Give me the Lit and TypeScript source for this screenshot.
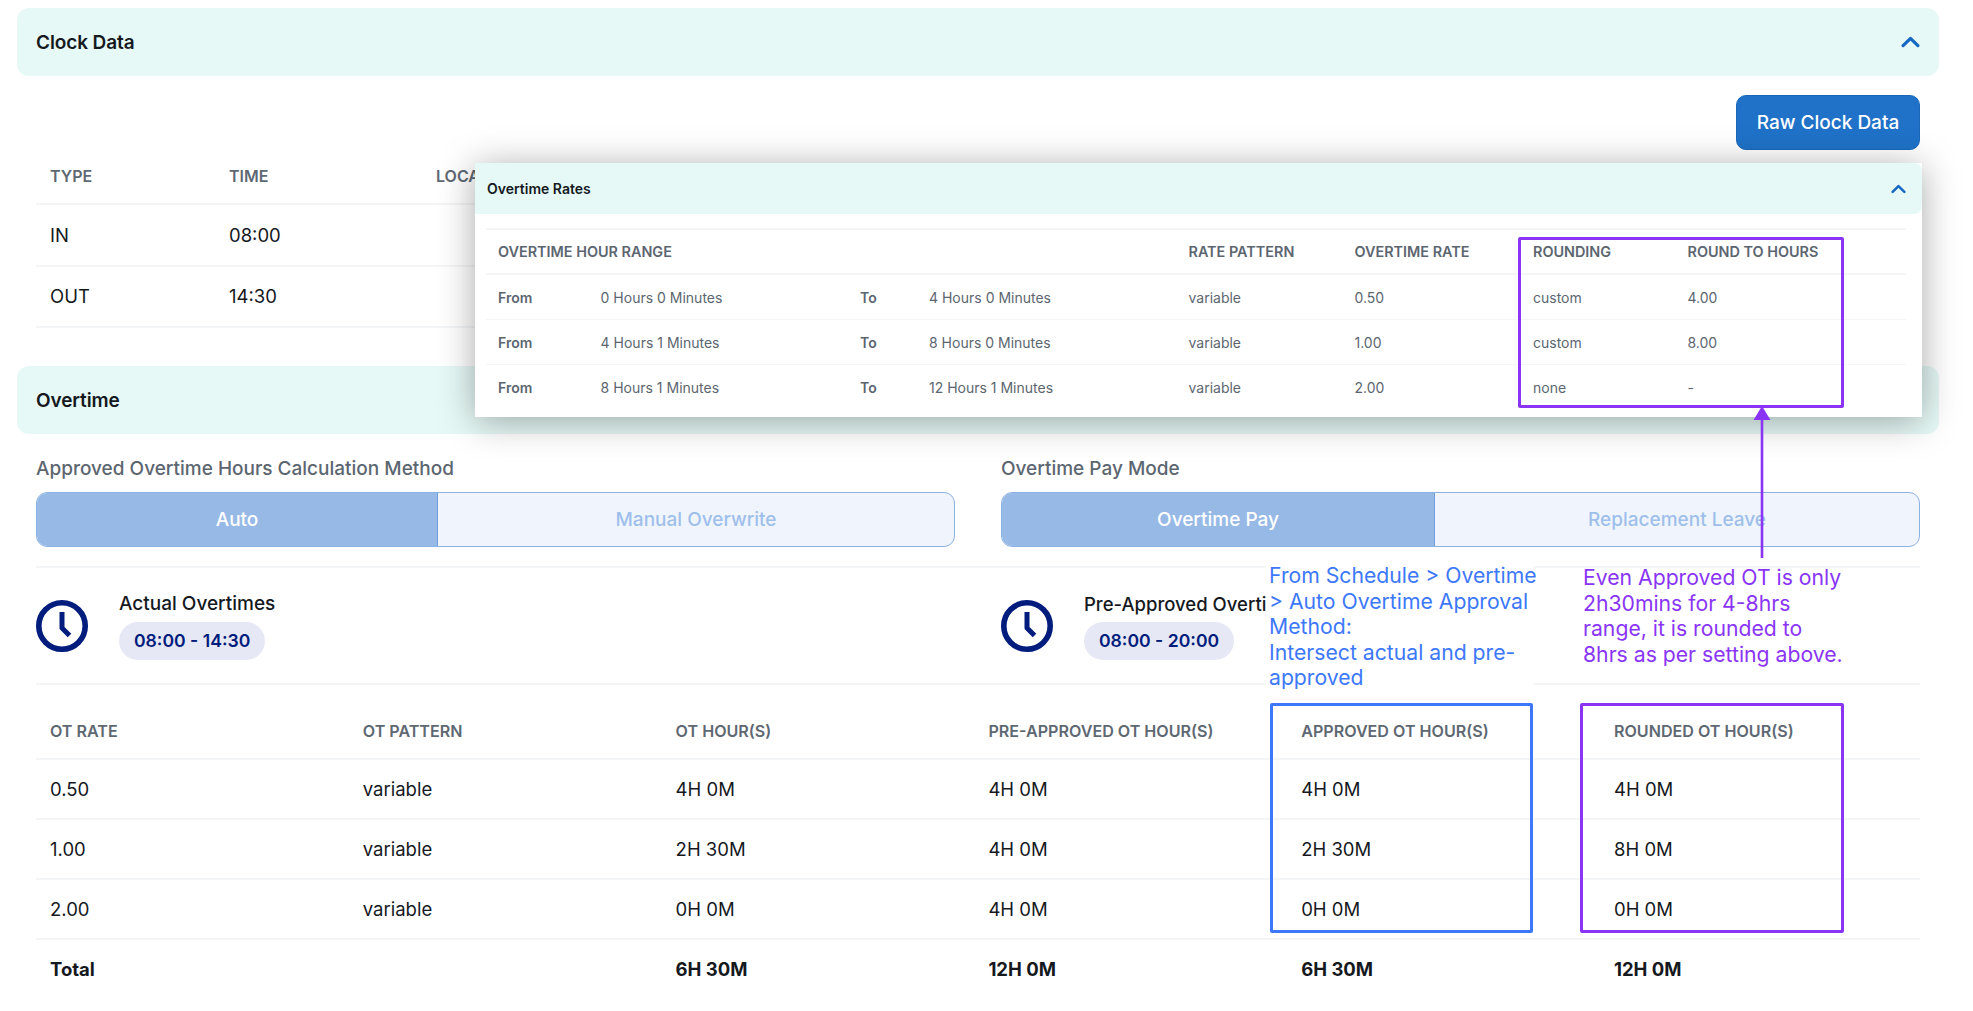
import { LitElement, html, css } from "lit";
import { customElement } from "lit/decorators.js";

const chevron = (cls: string) => html`<svg class=${cls} viewBox="0 0 18 11" fill="none" stroke="#1668c4" stroke-width="3" stroke-linecap="round" stroke-linejoin="round"><polyline points="2,9 9,2 16,9"></polyline></svg>`;
const clock = html`<svg class="clock" viewBox="0 0 52 52" fill="none" stroke="#001c7c"><circle cx="26" cy="26" r="23.2" stroke-width="5.6"></circle><polyline points="26,12 26,28 33.5,35.5" stroke-width="5" stroke-linejoin="round"></polyline></svg>`;

@customElement("app-root")
export class AppRoot extends LitElement {
  static styles = css`
    :host { display: block; position: relative; width: 1973px; height: 1011px; overflow: hidden; background: #fff; font-family: Inter, "Noto Sans", sans-serif; color: #15191e; }
    * { box-sizing: border-box; }
    .page { width: 1922px; margin-left: 17px; padding-top: 8px; }
    .bar { height: 68px; background: #e6f9f6; border-radius: 12px; display: flex; align-items: center; justify-content: space-between; padding: 0 19px; font-size: 19px; font-weight: 600; letter-spacing: -0.1px; }
    .chev { width: 19px; height: 12px; margin-right: 0; }
    .body { padding: 0 19px; }
    .actions { display: flex; justify-content: flex-end; padding-top: 19px; }
    .raw { width: 184px; height: 55px; display: flex; align-items: center; justify-content: center; background: #1f72c8; border: 1px solid #1a68ba; border-radius: 10px; color: #fff; font-size: 19px; font-weight: 500; }
    .clocktable { height: 216px; }
    .row { display: grid; align-items: center; border-bottom: 2px solid #f3f5f7; padding-left: 14px; }
    .clocktable .row { grid-template-columns: 179px 207px 1fr; height: 61.5px; font-size: 18.5px; }
    .clocktable .row.head { height: 55px; padding-bottom: 2px; font-size: 16px; }
    .head { color: #5e6872; font-weight: 600; }
    .fields { display: grid; grid-template-columns: 965px 919px; padding-top: 24px; }
    .label { font-size: 19px; font-weight: 500; color: #5c6670; line-height: 22px; margin-bottom: 12px; }
    .toggle { display: flex; height: 55px; border: 1.5px solid #8cb2e4; border-radius: 11px; overflow: hidden; background: #f0f5fd; font-size: 19px; font-weight: 500; color: #9fbfeb; }
    .toggle div { display: flex; align-items: center; justify-content: center; }
    .toggle .on { background: #97b9e6; color: #fff; border-right: 1.5px solid #6e9fdc; }
    .f1 { width: 919px; }
    .f1 .on { width: 401px; } .f1 .off { flex: 1; }
    .f2 .on { width: 433px; } .f2 .off { flex: 1; }
    .times { display: grid; grid-template-columns: 965px 919px; height: 119px; margin-top: 19px; border-top: 2px solid #f3f5f7; border-bottom: 2px solid #f3f5f7; align-items: center; }
    .time { display: flex; gap: 31px; align-items: center; }
    .clock { width: 52px; height: 52px; flex: none; }
    .tt { font-size: 19px; font-weight: 500; line-height: 24px; margin-bottom: 6px; white-space: nowrap; }
    .tt.narrow { font-size: 18.5px; }
    .pill { display: inline-flex; align-items: center; height: 38px; padding: 0 15px; border-radius: 19px; background: #e7e8f5; color: #001c7c; font-size: 17.6px; font-weight: 600; }
    .ot .row { grid-template-columns: repeat(5, 312.8px) 1fr; height: 60px; font-size: 18.5px; }
    .ot .row.head { height: 75px; padding-top: 18px; font-size: 16.1px; }
    .ot .row.total { border-bottom: 0; font-weight: 700; height: 58px; }

    .modal { position: absolute; left: 475px; top: 163px; width: 1447px; height: 254px; background: #fff; box-shadow: 0 4px 34px rgba(0,0,0,.34); }
    .mbar { height: 51px; background: #e6f9f6; border-radius: 0 8px 8px 0; display: flex; align-items: center; justify-content: space-between; padding: 0 16px 0 12px; font-size: 14px; font-weight: 600; }
    .chev2 { width: 15px; height: 10px; }
    .mtable { margin: 14px 16px 0 11px; border-top: 2px solid #f3f5f7; }
    .mrow { display: grid; grid-template-columns: 102.6px 259.4px 69px 259.5px 166px 178.5px 154.5px 1fr; align-items: center; height: 45px; padding-left: 12px; border-bottom: 1.5px solid #f3f5f7; font-size: 14px; color: #5c6670; }
    .mrow.mhead { grid-template-columns: 690.5px 166px 178.5px 154.5px 1fr; font-weight: 600; font-size: 14.4px; border-bottom-width: 2px; }
    .mrow:last-child { border-bottom: 0; }
    .mrow b { font-weight: 600; }

    .box { position: absolute; border: 3px solid; border-radius: 2px; }
    .note { position: absolute; font-size: 21.2px; line-height: 25.5px; }
    .n1 { left: 1266px; top: 563px; width: 268px; height: 122px; padding-left: 3px; background: #fff; color: #3d78fb; white-space: nowrap; }
    .n2 { left: 1583px; top: 565px; color: #8a35f5; white-space: nowrap; }
    .arrow { position: absolute; left: 1752px; top: 406px; width: 20px; height: 152px; }
  `;

  render() {
    const ot = [["0.50","variable","4H 0M","4H 0M","4H 0M","4H 0M"],["1.00","variable","2H 30M","4H 0M","2H 30M","8H 0M"],["2.00","variable","0H 0M","4H 0M","0H 0M","0H 0M"]];
    const ranges = [["0 Hours 0 Minutes","4 Hours 0 Minutes","0.50","custom","4.00"],["4 Hours 1 Minutes","8 Hours 0 Minutes","1.00","custom","8.00"],["8 Hours 1 Minutes","12 Hours 1 Minutes","2.00","none","-"]];
    return html`
      <div class="page">
        <div class="bar"><span>Clock Data</span>${chevron("chev")}</div>
        <div class="body">
          <div class="actions"><div class="raw">Raw Clock Data</div></div>
          <div class="clocktable">
            <div class="row head"><span>TYPE</span><span>TIME</span><span>LOCATION</span></div>
            <div class="row"><span>IN</span><span>08:00</span><span></span></div>
            <div class="row"><span>OUT</span><span>14:30</span><span></span></div>
          </div>
        </div>
        <div class="bar"><span>Overtime</span></div>
        <div class="body">
          <div class="fields">
            <div>
              <div class="label">Approved Overtime Hours Calculation Method</div>
              <div class="toggle f1"><div class="on" >Auto</div><div class="off">Manual Overwrite</div></div>
            </div>
            <div>
              <div class="label">Overtime Pay Mode</div>
              <div class="toggle f2"><div class="on">Overtime Pay</div><div class="off">Replacement Leave</div></div>
            </div>
          </div>
          <div class="times">
            <div class="time">${clock}<div><div class="tt">Actual Overtimes</div><span class="pill">08:00 - 14:30</span></div></div>
            <div class="time">${clock}<div><div class="tt narrow">Pre-Approved Overtimes</div><span class="pill">08:00 - 20:00</span></div></div>
          </div>
          <div class="ot">
            <div class="row head"><span>OT RATE</span><span>OT PATTERN</span><span>OT HOUR(S)</span><span>PRE-APPROVED OT HOUR(S)</span><span>APPROVED OT HOUR(S)</span><span>ROUNDED OT HOUR(S)</span></div>
            ${ot.map((r) => html`<div class="row">${r.map((c) => html`<span>${c}</span>`)}</div>`)}
            <div class="row total"><span>Total</span><span></span><span>6H 30M</span><span>12H 0M</span><span>6H 30M</span><span>12H 0M</span></div>
          </div>
        </div>
      </div>

      <div class="modal">
        <div class="mbar"><span>Overtime Rates</span>${chevron("chev2")}</div>
        <div class="mtable">
          <div class="mrow mhead"><span>OVERTIME HOUR RANGE</span><span>RATE PATTERN</span><span>OVERTIME RATE</span><span>ROUNDING</span><span>ROUND TO HOURS</span></div>
          ${ranges.map((r) => html`<div class="mrow"><b>From</b><span>${r[0]}</span><b>To</b><span>${r[1]}</span><span>variable</span><span>${r[2]}</span><span>${r[3]}</span><span>${r[4]}</span></div>`)}
        </div>
      </div>

      <div class="note n1">From Schedule &gt; Overtime<br />&gt; Auto Overtime Approval<br />Method:<br />Intersect actual and pre-<br />approved</div>
      <div class="note n2">Even Approved OT is only<br />2h30mins for 4-8hrs<br />range, it is rounded to<br />8hrs as per setting above.</div>
      <div class="box" style="left:1518px;top:237px;width:326px;height:171px;border-color:#8a35f5"></div>
      <div class="box" style="left:1270px;top:703px;width:263px;height:230px;border-color:#3d78fb"></div>
      <div class="box" style="left:1580px;top:703px;width:263.5px;height:230px;border-color:#8a35f5"></div>
      <svg class="arrow" viewBox="0 0 20 152"><polygon points="10,0 18.5,14 1.5,14" fill="#8a35f5"></polygon><rect x="8.7" y="12" width="2.6" height="140" fill="#8a35f5"></rect></svg>
    `;
  }
}
